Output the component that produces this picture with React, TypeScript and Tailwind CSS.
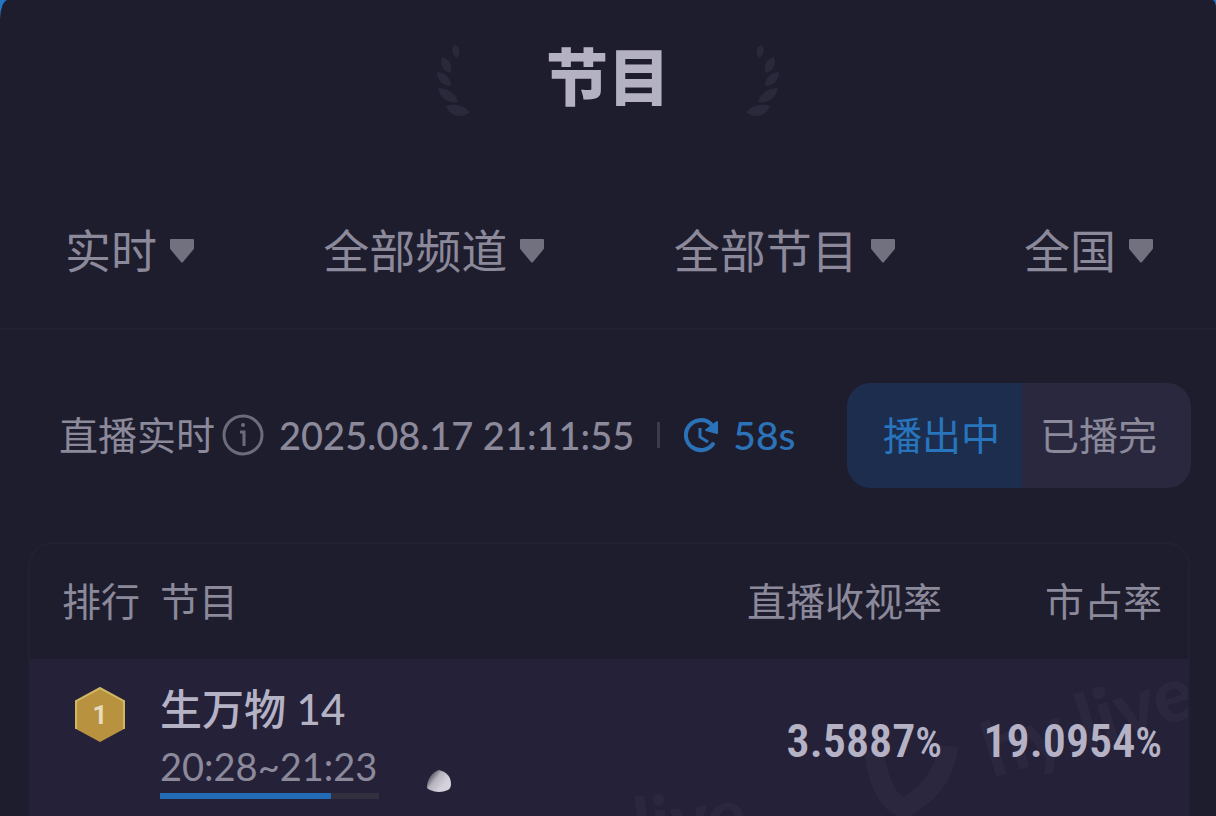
import { useState } from "react";

const filters = [
  { id: "period", label: "时间", value: "实时" },
  { id: "channel", label: "频道", value: "全部频道" },
  { id: "program", label: "节目类型", value: "全部节目" },
  { id: "region", label: "地区", value: "全国" },
];

const rows = [
  { rank: 1, name: "生万物 14", time: "20:28~21:23", progress: 78, rating: "3.5887", share: "19.0954" },
];

function Laurel({ flip = false }: { flip?: boolean }) {
  return (
    <svg
      viewBox="0 0 36 74"
      className={`h-[74px] w-9 fill-[#2a293b] ${flip ? "-scale-x-100" : ""}`}
      aria-hidden="true"
    >
      <path d="M18 1c6 1 7 7 3 13-5-3-6-8-3-13Z" />
      <path d="M6 13c8 2 11 8 8 16-7-2-11-8-8-16Z" />
      <path d="M1 28c9 1 14 6 14 14-8 0-14-5-14-14Z" />
      <path d="M2 44c10 0 17 5 20 14-10 2-18-4-20-14Z" />
      <path d="M10 62c8-3 18-1 24 6-7 7-20 5-24-6Z" />
    </svg>
  );
}

function Caret() {
  return (
    <svg viewBox="0 0 26 24" className="h-6 w-[26px] fill-[#71717f]" aria-hidden="true">
      <path d="M2 0h22q1 0 1 1v8q0 1-1 2L14 23q-1 1-2 0L2 11Q1 10 1 9V1Q1 0 2 0Z" />
    </svg>
  );
}

function RefreshClock() {
  return (
    <svg viewBox="0 0 36 36" className="size-9" fill="none" stroke="#2b72b8" strokeWidth="4" aria-hidden="true">
      <path d="M28 7A15 15 0 1 0 30 27" strokeLinecap="round" />
      <path d="M34 5v11l-11-3Z" fill="#2b72b8" stroke="#2b72b8" strokeWidth="2" strokeLinejoin="round" />
      <path d="M17 11v9l8 5" strokeWidth="3" />
    </svg>
  );
}

function RankBadge({ rank }: { rank: number }) {
  return (
    <svg viewBox="0 0 50 56" className="mx-auto h-14 w-[50px]" role="img" aria-label={`第${rank}名`}>
      <path d="M25 1 49 14v28L25 55 1 42V14Z" fill="#b9923f" />
      <path d="M1 42V14L25 1l24 13v28" fill="none" stroke="#d0b763" strokeWidth="2" />
      <text x="25" y="37" textAnchor="middle" fontFamily="Roboto, sans-serif" fontSize="26" fontWeight="700" fill="#e6dcc0">
        {rank}
      </text>
    </svg>
  );
}

// Marca de agua de fondo, detrás de las cifras
function Watermark() {
  return (
    <svg
      viewBox="0 0 580 156"
      className="pointer-events-none absolute right-0 bottom-0 h-[156px] w-[580px]"
      fontFamily="Lato, sans-serif"
      fontWeight="900"
      fill="#2a273e"
      aria-hidden="true"
    >
      <text x="384" y="118" fontSize="76" transform="rotate(-17 384 118)">
        hy.live
      </text>
      <text x="28" y="190" fontSize="72" transform="rotate(-6 28 190)">
        live
      </text>
      <path d="M266 90q6 50 30 58 40-22 44-62" fill="none" stroke="#2a273e" strokeWidth="20" />
    </svg>
  );
}

function AssistDot() {
  return (
    <svg viewBox="0 0 26 24" className="absolute left-[396px] top-[110px] h-6 w-[26px]" aria-hidden="true">
      <defs>
        <linearGradient id="dot" x1="0" y1="0.2" x2="0.7" y2="0.7">
          <stop offset="0.1" stopColor="#4c4957" />
          <stop offset="0.5" stopColor="#b5b2be" />
          <stop offset="1" stopColor="#d6d2dd" />
        </linearGradient>
      </defs>
      <path d="M1 19C1 10 6 3 13 1c8 2 12 7 12 14q0 4-3 6-9 4-18 0-2-1-3-2Z" fill="url(#dot)" />
    </svg>
  );
}

function Percent({ value }: { value: string }) {
  return (
    <span className="font-['Roboto_Condensed',Roboto,sans-serif] text-[46px] leading-[56px] font-semibold text-[#b4b2c4]">
      {value}
      <span className="text-[42px] font-medium">%</span>
    </span>
  );
}

export default function App() {
  const [tab, setTab] = useState("live");

  return (
    <div className="h-screen overflow-hidden bg-[#2474c4] font-['Lato','Noto_Sans_CJK_SC',sans-serif] text-[#8b899a]">
      <main className="flex min-h-full flex-col rounded-tl-[8px_20px] rounded-tr-[4px_8px] bg-[#1e1d2e]">
        <header className="flex h-[154px] items-center justify-center gap-[74px] pt-2">
          <Laurel />
          <h1 className="pb-2 text-[62px] leading-[62px] font-black text-[#b4b2c2]">节目</h1>
          <Laurel flip />
        </header>

        <div className="flex justify-between border-b-2 border-[#222132] pt-16 pr-[62px] pb-11 pl-[65px]">
          {filters.map((f) => (
            <div key={f.id} className="flex items-center gap-3">
              <select
                id={f.id}
                aria-label={f.label}
                className="-my-px h-[68px] appearance-none bg-transparent text-[46px] leading-[68px] outline-none"
              >
                <option>{f.value}</option>
              </select>
              <Caret />
            </div>
          ))}
        </div>

        <div className="flex items-center justify-between pt-[53px] pr-[25px] pb-[54px] pl-[59px] text-[39px] leading-[52px]">
          <div className="flex items-center pb-[2px] whitespace-nowrap">
            <span>直播实时</span>
            <button type="button" aria-label="说明" className="mx-[7px]">
              <svg viewBox="0 0 42 42" className="size-[42px]" fill="none" stroke="#6d6b7b" strokeWidth="3" aria-hidden="true">
                <circle cx="21" cy="21" r="19" />
                <path d="M18 18h4v14" />
                <circle cx="21" cy="11" r="2" fill="#6d6b7b" stroke="none" />
              </svg>
            </button>
            <time className="ml-2 text-[38px] font-medium">2025.08.17 21:11:55</time>
            <span className="mx-[23px] h-[26px] w-[3px] bg-[#3c3a4b]" />
            <RefreshClock />
            <span className="ml-[14px] font-medium text-[#2b72b8]">58s</span>
          </div>

          <div className="flex h-[105px] overflow-hidden rounded-3xl bg-[#29283e]">
            <button
              type="button"
              aria-pressed={tab === "live"}
              onClick={() => setTab("live")}
              className={`pr-[22px] pb-[2px] pl-9 ${tab === "live" ? "bg-[#1c2d4e] text-[#2874bd]" : ""}`}
            >
              播出中
            </button>
            <button
              type="button"
              aria-pressed={tab === "done"}
              onClick={() => setTab("done")}
              className={`pr-[34px] pb-[2px] pl-[18px] ${tab === "done" ? "bg-[#1c2d4e] text-[#2874bd]" : ""}`}
            >
              已播完
            </button>
          </div>
        </div>

        <section className="mr-[26px] ml-7 flex-1 overflow-hidden rounded-t-3xl border-2 border-b-0 border-[#222133]">
          <table className="w-full table-fixed">
            <thead>
              <tr className="h-[115px] text-[39px] leading-[52px]">
                <th className="w-[130px] pb-[2px] pl-8 text-left font-normal whitespace-nowrap">排行</th>
                <th className="pb-[2px] text-left font-normal">节目</th>
                <th className="w-[240px] pb-[2px] text-right font-normal whitespace-nowrap">直播收视率</th>
                <th className="w-[246px] pr-[26px] pb-[2px] text-right font-normal">市占率</th>
              </tr>
            </thead>
            <tbody>
              {rows.map((r) => (
                <tr key={r.rank} className="relative h-[157px] bg-[#242139]">
                  <td className="pt-7 pl-[10px] align-top">
                    <RankBadge rank={r.rank} />
                  </td>
                  <td className="pt-6 align-top">
                    <div className="text-[42px] leading-[52px] font-medium whitespace-nowrap text-[#b4b2c4]">{r.name}</div>
                    <div className="w-[219px]">
                      <div className="mt-1 text-[38px] leading-[54px] whitespace-nowrap">{r.time}</div>
                      <div className="h-[6px] bg-[#32303f]">
                        <div className="h-full bg-[#246bb5]" style={{ width: `${r.progress}%` }} />
                      </div>
                    </div>
                    <AssistDot />
                    <Watermark />
                  </td>
                  <td className="relative pt-2 text-right">
                    <Percent value={r.rating} />
                  </td>
                  <td className="relative pt-2 pr-[26px] text-right">
                    <Percent value={r.share} />
                  </td>
                </tr>
              ))}
            </tbody>
          </table>
        </section>
      </main>
    </div>
  );
}
